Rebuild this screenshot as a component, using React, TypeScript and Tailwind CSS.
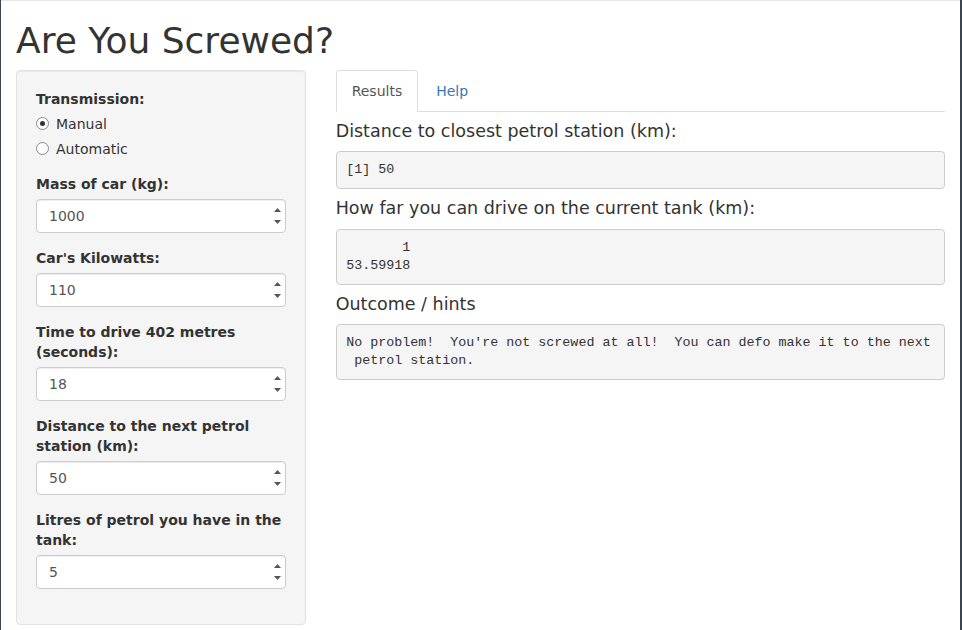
import React from "react";

const SANS = "font-['DejaVu_Sans',_'Noto_Sans',_sans-serif]";
const MONO = "font-['Liberation_Mono',_'DejaVu_Sans_Mono',_monospace]";

// numeric input with the old-style spin arrows drawn on top
function NumberField({ label, value }: { label: string; value: string }) {
  return (
    <div className="mb-[15px]">
      <label className="mb-[5px] block text-sm font-bold leading-5">{label}</label>
      <div className="relative">
        <input
          type="text"
          defaultValue={value}
          className="block h-[34px] w-full rounded border border-[#ccc] bg-white px-3 py-1.5 text-sm leading-5 text-[#555] shadow-[inset_0_1px_1px_rgba(0,0,0,0.075)] outline-none"
        />
        <svg className="pointer-events-none absolute right-[4px] top-0" width="9" height="34" viewBox="0 0 9 34">
          <path d="M1 13 L4.5 9 L8 13 Z" fill="#555" />
          <path d="M1 21 L4.5 25 L8 21 Z" fill="#555" />
        </svg>
      </div>
    </div>
  );
}

function Radio({ label, checked }: { label: string; checked?: boolean }) {
  return (
    <div className="relative flex h-5 items-center pl-5 text-sm leading-5">
      <span className="absolute left-0 top-[3px] flex h-[13px] w-[13px] items-center justify-center rounded-full border border-[#8a8a8a] bg-white">
        {checked && <span className="h-[5px] w-[5px] rounded-full bg-[#333]" />}
      </span>
      {label}
    </div>
  );
}

const pre =
  "mb-[10px] whitespace-pre-wrap break-words rounded border border-[#ccc] bg-[#f5f5f5] px-[9.5px] py-[9.5px] text-[13.35px] leading-[17.5px] text-[#333] " +
  MONO;
const h4 = "mt-[10px] mb-[10px] text-[17.5px] font-normal leading-[1.1]";

export default function App() {
  return (
    <div className={`flex h-[630px] w-[962px] overflow-hidden bg-white text-[#333] ${SANS}`}>
      <div className="w-px shrink-0 bg-[#3c4450]" />
      <div className="w-[959px] shrink-0 border-t border-[#e6e6ea] px-[15px]">
        <h1 className="mt-5 mb-[9px] text-[36px] font-normal leading-[1.1]">Are You Screwed?</h1>
        <div className="-mx-[15px] flex">
          <div className="w-1/3 shrink-0 px-[15px]">
            <div className="mb-5 rounded border border-[#e3e3e3] bg-[#f5f5f5] px-[19px] pt-[18px] pb-[20px] shadow-[inset_0_1px_1px_rgba(0,0,0,0.05)]">
              <div className="mb-[15px]">
                <label className="mb-[5px] block text-sm font-bold leading-5">Transmission:</label>
                <div className="flex flex-col gap-[5px]">
                  <Radio label="Manual" checked />
                  <Radio label="Automatic" />
                </div>
              </div>
              <NumberField label="Mass of car (kg):" value="1000" />
              <NumberField label="Car's Kilowatts:" value="110" />
              <NumberField label="Time to drive 402 metres (seconds):" value="18" />
              <NumberField label="Distance to the next petrol station (km):" value="50" />
              <NumberField label="Litres of petrol you have in the tank:" value="5" />
            </div>
          </div>
          <div className="w-2/3 shrink-0 px-[15px]">
            <ul className="flex border-b border-[#ddd] text-sm leading-5">
              <li className="-mb-px">
                <span className="mr-[2px] block rounded-t border border-[#ddd] border-b-transparent bg-white px-[15px] py-[10px] text-[#555]">
                  Results
                </span>
              </li>
              <li className="-mb-px">
                <span className="mr-[2px] block rounded-t border border-transparent px-[15px] py-[10px] text-[#337ab7]">
                  Help
                </span>
              </li>
            </ul>
            <div>
              <h4 className={h4}>Distance to closest petrol station (km):</h4>
              <pre className={pre}>[1] 50</pre>
              <h4 className={h4}>How far you can drive on the current tank (km):</h4>
              <pre className={pre}>{"       1\n53.59918"}</pre>
              <h4 className={h4}>Outcome / hints</h4>
              <pre className={pre}>
                {"No problem!  You're not screwed at all!  You can defo make it to the next\n petrol station."}
              </pre>
            </div>
          </div>
        </div>
      </div>
      <div className="w-[2px] shrink-0 bg-[#3c4450]" />
    </div>
  );
}
